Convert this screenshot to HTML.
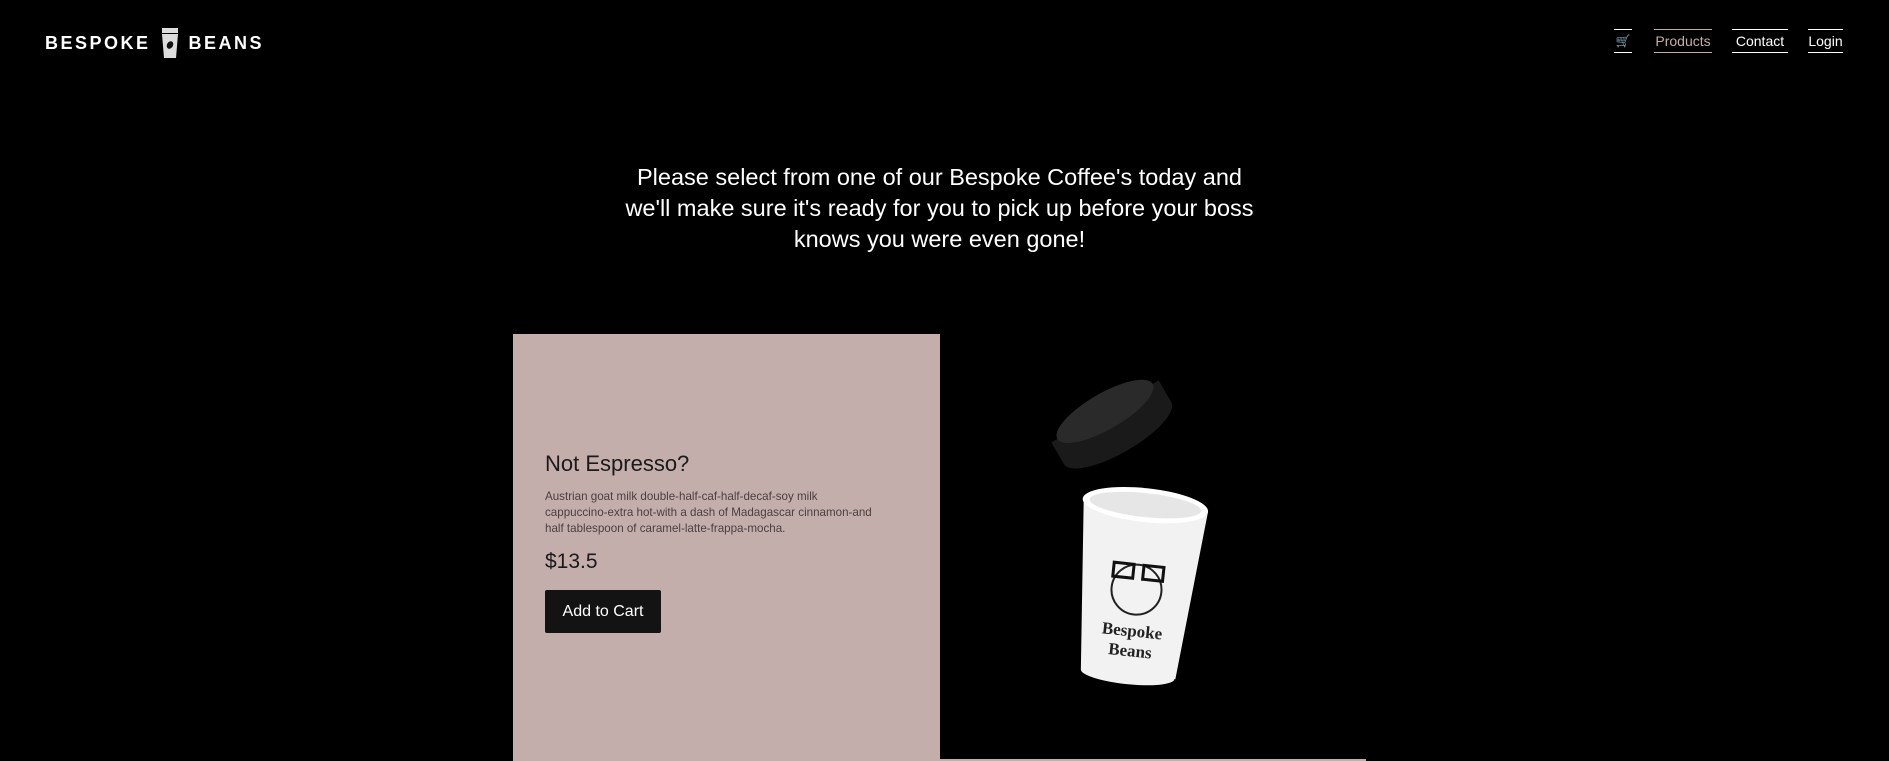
<!DOCTYPE html>
<html><head><meta charset="utf-8"><style>
*{margin:0;padding:0;box-sizing:border-box}
body{width:1889px;height:761px;background:#000;overflow:hidden;position:relative;font-family:"Liberation Sans",sans-serif;color:#fff}
.logo{position:absolute;left:45px;top:28px;font-size:18px;font-weight:bold;letter-spacing:2.5px;display:flex;align-items:center;gap:10px}
.nav a{position:absolute;top:29px;height:24px;border-top:1px solid #fff;border-bottom:1px solid #fff;font-size:14px;line-height:22px;color:#fff;text-decoration:none;text-align:center}
h2{position:absolute;left:0;width:1879px;top:162px;text-align:center;font-size:23.5px;font-weight:normal;line-height:31px}
.card{position:absolute;left:513px;top:334px;width:427px;height:427px;background:#c4aeac;color:#1a1a1a}
.card h3{position:absolute;left:32px;top:117px;font-size:22px;font-weight:normal}
.card p{position:absolute;left:32px;top:155px;width:390px;font-size:11.6px;line-height:16px;color:#4a3e3e}
.price{position:absolute;left:32px;top:216px;font-size:21px}
.btn{position:absolute;left:32px;top:256px;width:116px;height:43px;background:#131313;color:#fff;border-radius:2px;font-size:16px;line-height:43px;text-align:center}
</style></head><body>
<div class="logo"><span>BESPOKE</span>
<svg width="18" height="30" viewBox="0 0 18 30"><rect x="1" y="0" width="16" height="5" fill="#ddd"/><path d="M1 6H17L15 30H3Z" fill="#ddd"/><ellipse cx="9" cy="17" rx="3" ry="4" fill="#111" transform="rotate(30 9 17)"/></svg>
<span>BEANS</span></div>
<div class="nav">
<a style="left:1614px;width:18px;font-size:12px;color:#bbb">🛒</a>
<a style="left:1654px;width:58px;color:#c4aeac;border-color:#c4aeac">Products</a>
<a style="left:1732px;width:56px">Contact</a>
<a style="left:1808px;width:35px">Login</a>
</div>
<h2>Please select from one of our Bespoke Coffee's today and<br>we'll make sure it's ready for you to pick up before your boss<br>knows you were even gone!</h2>
<div class="card"><h3>Not Espresso?</h3>
<p>Austrian goat milk double-half-caf-half-decaf-soy milk<br>cappuccino-extra hot-with a dash of Madagascar cinnamon-and<br>half tablespoon of caramel-latte-frappa-mocha.</p>
<div class="price">$13.5</div><div class="btn">Add to Cart</div></div>
<div style="position:absolute;left:940px;top:759px;width:426px;height:2px;background:#c4aeac"></div>
<svg style="position:absolute;left:1040px;top:365px" width="180" height="330" viewBox="0 0 180 330">
<g transform="rotate(-30 70 55)"><ellipse cx="70" cy="70" rx="62" ry="20" fill="#1a1a1a"/><rect x="8" y="45" width="124" height="25" fill="#1a1a1a"/><ellipse cx="70" cy="45" rx="55" ry="18" fill="#2a2a2a"/></g>
<g transform="rotate(6 100 220)"><path d="M35 140 L160 140 L145 310 L50 310 Z" fill="#f2f2f2"/><ellipse cx="97" cy="140" rx="63" ry="17" fill="#fff"/><ellipse cx="97" cy="140" rx="56" ry="12" fill="#e6e6e6"/><ellipse cx="97" cy="310" rx="47" ry="10" fill="#f2f2f2"/>
<circle cx="97" cy="225" r="25" fill="none" stroke="#222" stroke-width="2"/><rect x="72" y="200" width="20" height="14" fill="none" stroke="#111" stroke-width="3"/><rect x="102" y="200" width="20" height="14" fill="none" stroke="#111" stroke-width="3"/>
<text x="97" y="272" text-anchor="middle" font-family="Liberation Serif" font-weight="bold" font-size="17" fill="#222">Bespoke</text><text x="97" y="292" text-anchor="middle" font-family="Liberation Serif" font-weight="bold" font-size="17" fill="#222">Beans</text></g>
</svg>
</body></html>
